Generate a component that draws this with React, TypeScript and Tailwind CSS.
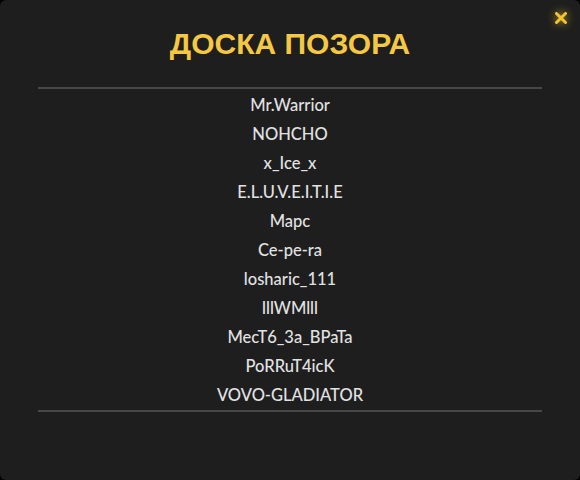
import { X } from "lucide-react";

const names = [
  "Mr.Warrior",
  "NOHCHO",
  "x_Ice_x",
  "E.L.U.V.E.I.T.I.E",
  "Марс",
  "Ce-pe-ra",
  "losharic_111",
  "lllWMlll",
  "MecT6_3a_BPaTa",
  "PoRRuT4icK",
  "VOVO-GLADIATOR",
];

export default function App() {
  return (
    <div className="w-[580px] h-[480px] bg-black">
      <div className="relative w-full h-full rounded-[6px] bg-[#1e1e1e] px-[38px] pt-[25px]">
        <button className="absolute right-[10px] top-[9px] text-[#f2c430] drop-shadow-[0_0_4px_rgba(242,196,48,0.8)]">
          <X size={18} strokeWidth={4} />
        </button>

        <h1 className="text-center text-[30px] font-bold leading-[38px] text-[#f5c842] font-['Liberation_Sans',Arial,sans-serif]">
          ДОСКА ПОЗОРА
        </h1>

        <div className="mt-[24px] border-t-2 border-[#474747]" />

        <ul className="pt-[2px] text-center text-[16.5px] font-medium leading-[29px] text-[#e2e2e2] font-['Lato',sans-serif]">
          {names.map((name) => (
            <li key={name}>{name}</li>
          ))}
        </ul>

        <div className="border-t-2 border-[#474747]" />
      </div>
    </div>
  );
}
